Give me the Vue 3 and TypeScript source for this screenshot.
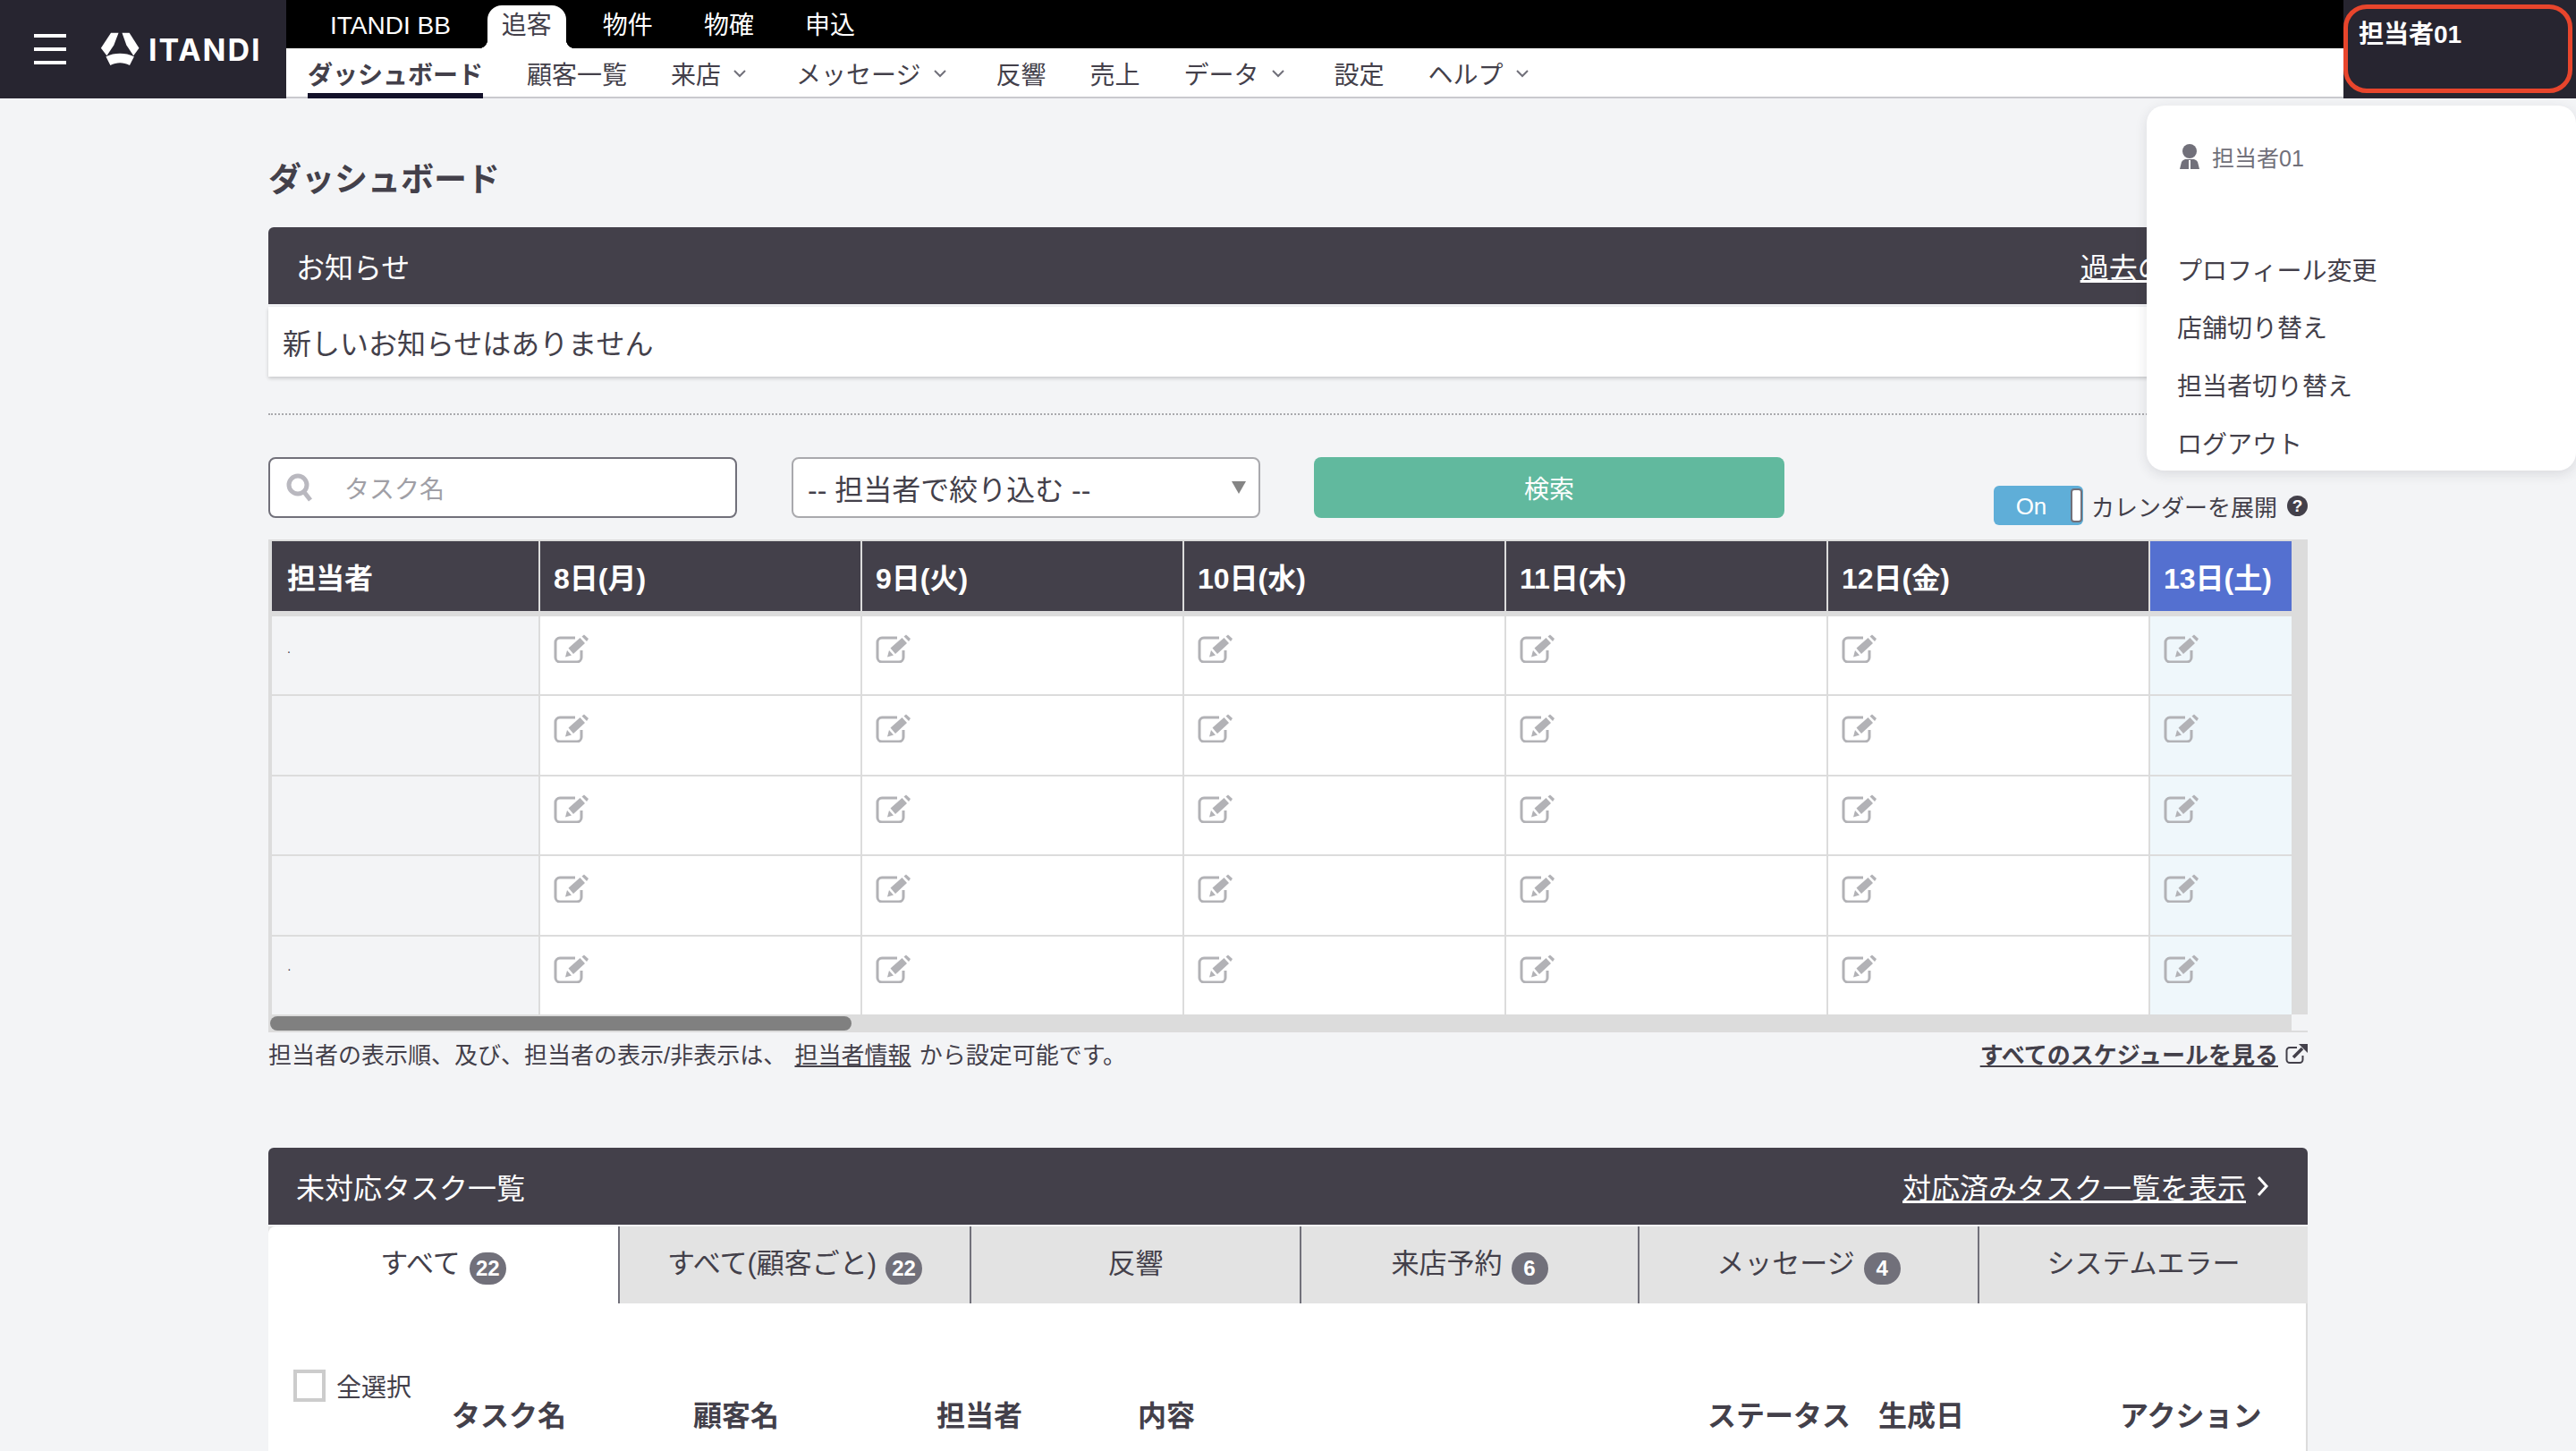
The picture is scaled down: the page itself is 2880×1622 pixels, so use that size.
<script setup lang="ts">
const topTabs = [
  { label: 'ITANDI BB', active: false },
  { label: '追客', active: true },
  { label: '物件', active: false },
  { label: '物確', active: false },
  { label: '申込', active: false },
]

const subNav = [
  { label: 'ダッシュボード', active: true, caret: false },
  { label: '顧客一覧', active: false, caret: false },
  { label: '来店', active: false, caret: true },
  { label: 'メッセージ', active: false, caret: true },
  { label: '反響', active: false, caret: false },
  { label: '売上', active: false, caret: false },
  { label: 'データ', active: false, caret: true },
  { label: '設定', active: false, caret: false },
  { label: 'ヘルプ', active: false, caret: true },
]

const days = ['8日(月)', '9日(火)', '10日(水)', '11日(木)', '12日(金)', '13日(土)']
const staffRows = ['.', '', '', '', '·']

const taskTabs = [
  { label: 'すべて', count: 22 },
  { label: 'すべて(顧客ごと)', count: 22 },
  { label: '反響', count: null },
  { label: '来店予約', count: 6 },
  { label: 'メッセージ', count: 4 },
  { label: 'システムエラー', count: null },
]

const taskColumns = ['タスク名', '顧客名', '担当者', '内容', 'ステータス', '生成日', 'アクション']
const menuItems = ['プロフィール変更', '店舗切り替え', '担当者切り替え', 'ログアウト']
</script>

<template>
  <div class="app">
    <header class="top">
      <div class="brand">
        <span class="burger"><i /><i /><i /></span>
        <svg class="logo-mark" viewBox="36 28 136 116" aria-hidden="true">
          <path d="M72 30h26L82 72 58 108 38 82z" fill="#fff" />
          <path d="M110 30h25l33 52-19 26-24-36z" fill="#fff" />
          <path d="M55 111c30-14 66-14 96 0l-15 30c-22-11-44-11-66 0z" fill="#fff" />
        </svg>
        <span class="logo-text">ITANDI</span>
      </div>

      <div class="nav">
        <div class="tier-one">
          <a v-for="t in topTabs" :key="t.label" class="top-tab" :class="{ active: t.active }">{{ t.label }}</a>
        </div>
        <div class="tier-two">
          <a v-for="n in subNav" :key="n.label" class="sub-item" :class="{ active: n.active, caret: n.caret }">
            {{ n.label }}
            <svg v-if="n.caret" class="caret-icon" viewBox="0 0 16 10" aria-hidden="true">
              <path d="M2 2l6 6 6-6" fill="none" stroke="#71707a" stroke-width="2" />
            </svg>
          </a>
        </div>
      </div>

      <div class="account">
        <div class="account-ring">担当者01</div>
      </div>
    </header>

    <main class="page">
      <h1 class="title">ダッシュボード</h1>

      <section class="notice">
        <div class="bar">
          <span>お知らせ</span>
          <a class="bar-link">過去のお知らせ</a>
        </div>
        <div class="notice-body">新しいお知らせはありません</div>
      </section>

      <div class="dots" />

      <div class="filters">
        <label class="search">
          <svg class="search-icon" viewBox="0 0 30 32" aria-hidden="true">
            <circle cx="13" cy="13" r="10" fill="none" stroke="#b9b8bf" stroke-width="5" />
            <path d="M20 21l7 9" stroke="#b9b8bf" stroke-width="5" />
          </svg>
          <span class="placeholder">タスク名</span>
        </label>
        <div class="select">
          <span>-- 担当者で絞り込む --</span>
          <i class="select-arrow" />
        </div>
        <button class="search-btn" type="button">検索</button>
        <div class="expand">
          <span class="toggle">On<i class="toggle-handle" /></span>
          <span class="expand-label">カレンダーを展開</span>
          <span class="help">?</span>
        </div>
      </div>

      <section class="calendar">
        <div class="cal-grid">
          <div class="cal-head">担当者</div>
          <div
            v-for="(d, i) in days"
            :key="d"
            class="cal-head"
            :class="{ today: i === days.length - 1 }"
          >
            {{ d }}
          </div>
          <template v-for="(s, r) in staffRows" :key="r">
            <div class="cal-name">{{ s }}</div>
            <div
              v-for="(d, i) in days"
              :key="d"
              class="cal-cell"
              :class="{ today: i === days.length - 1 }"
            >
              <svg class="edit-icon" viewBox="0 0 40 32" aria-hidden="true">
                <path
                  d="M24 4H7a5 5 0 0 0-5 5v17a5 5 0 0 0 5 5h19a5 5 0 0 0 5-5v-8"
                  fill="none"
                  stroke="#b2b2b6"
                  stroke-width="3"
                />
                <path d="M16.500 15.500L29.500 4l5.500 6-13 12z" fill="#b2b2b6" />
                <path d="M15 18l5 5.500-7 2z" fill="#b2b2b6" />
                <path d="M31.500 2.500L34 .500 39 5l-2 3z" fill="#b2b2b6" />
              </svg>
            </div>
          </template>
        </div>
        <div class="h-scroll">
          <div class="h-track"><i class="h-thumb" /></div>
          <i class="h-corner" />
        </div>
      </section>

      <div class="cal-note">
        <p>
          担当者の表示順、及び、担当者の表示/非表示は、
          <a class="note-link">担当者情報</a>
          から設定可能です。
        </p>
        <a class="all-link">
          <span>すべてのスケジュールを見る</span>
          <svg class="ext-icon" viewBox="0 0 25 22" aria-hidden="true">
            <path
              d="M13 4H5a3.500 3.500 0 0 0-3.500 3.500v10A3.500 3.500 0 0 0 5 21h11a3.500 3.500 0 0 0 3.500-3.500V13"
              fill="none"
              stroke="#43404a"
              stroke-width="2"
            />
            <path d="M9 15L19 5" stroke="#43404a" stroke-width="3.500" />
            <path d="M15 0h10v10z" fill="#43404a" />
          </svg>
        </a>
      </div>

      <section class="tasks">
        <div class="bar tasks-bar">
          <span>未対応タスク一覧</span>
          <a class="tasks-link">
            <span>対応済みタスク一覧を表示</span>
            <svg class="chev" viewBox="0 0 14 24" aria-hidden="true">
              <path d="M2 2l9 10-9 10" fill="none" stroke="#fff" stroke-width="3" />
            </svg>
          </a>
        </div>
        <div class="task-tabs">
          <div v-for="(t, i) in taskTabs" :key="t.label" class="task-tab" :class="{ active: i === 0 }">
            {{ t.label }}
            <span v-if="t.count !== null" class="badge">{{ t.count }}</span>
          </div>
        </div>
        <div class="task-body">
          <label class="select-all"><i class="check" />全選択</label>
          <div class="task-head">
            <span v-for="c in taskColumns" :key="c">{{ c }}</span>
          </div>
        </div>
      </section>
    </main>

    <!-- Account dropdown, open over the page -->
    <div class="menu">
      <div class="menu-head">
        <svg class="person" viewBox="0 0 22 28" aria-hidden="true">
          <circle cx="11" cy="8" r="8" fill="#71707a" />
          <path d="M0 28l2-8q1-2 4-3h10q3 1 4 3l2 8z" fill="#71707a" />
          <path d="M10 18h2v10h-2z" fill="#fff" />
        </svg>
        <span>担当者01</span>
      </div>
      <ul class="menu-list">
        <li v-for="m in menuItems" :key="m">{{ m }}</li>
      </ul>
    </div>
  </div>
</template>

<style scoped>
.app {
  position: relative;
  width: 2880px;
  height: 1622px;
  overflow: hidden;
  background: #f3f4f6;
  color: #43404a;
  font-family: 'Liberation Sans', 'Noto Sans CJK JP', sans-serif;
}

.top {
  display: flex;
  height: 110px;
}
.brand {
  display: flex;
  align-items: center;
  width: 320px;
  padding-left: 38px;
  box-sizing: border-box;
  background: #272530;
}
.burger {
  display: flex;
  flex-direction: column;
  justify-content: space-between;
  width: 36px;
  height: 34px;
}
.burger i {
  height: 4px;
  background: #fff;
}
.logo-mark {
  width: 45px;
  height: 38px;
  margin-left: 38px;
}
.logo-text {
  margin-left: 9px;
  font-family: Inter, sans-serif;
  font-size: 34px;
  font-weight: 700;
  letter-spacing: 2px;
  color: #fff;
}

.nav {
  flex: 1;
  display: flex;
  flex-direction: column;
}
.tier-one {
  display: flex;
  align-items: flex-end;
  gap: 25px;
  height: 54px;
  padding-left: 33px;
  background: #000;
}
.top-tab {
  position: relative;
  height: 48px;
  padding: 0 16px;
  font-size: 28px;
  line-height: 46px;
  color: #fff;
}
.top-tab.active {
  border-radius: 16px 16px 0 0;
  background: #fff;
  color: #43404a;
}
.top-tab.active::before,
.top-tab.active::after {
  content: '';
  position: absolute;
  bottom: 0;
  width: 10px;
  height: 10px;
}
.top-tab.active::before {
  left: -10px;
  background: radial-gradient(circle at 0 0, #000 10px, #fff 10.500px);
}
.top-tab.active::after {
  right: -10px;
  background: radial-gradient(circle at 100% 0, #000 10px, #fff 10.500px);
}
.tier-two {
  display: flex;
  gap: 49px;
  height: 56px;
  padding-left: 24px;
  background: #fff;
  box-shadow: inset 0 -2px 0 #c9c9ce;
}
.sub-item {
  display: flex;
  align-items: center;
  font-size: 28px;
  color: #43404a;
}
.sub-item.active {
  font-weight: 700;
  box-shadow: inset 0 -6px 0 #14122a;
}
.sub-item.caret {
  margin-right: 6px;
}
.caret-icon {
  width: 16px;
  height: 10px;
  margin-left: 13px;
}

.account {
  width: 260px;
  padding: 5px 4px 6px 0;
  box-sizing: border-box;
  background: #272530;
}
.account-ring {
  height: 100%;
  padding: 9px 0 0 12px;
  box-sizing: border-box;
  border: 5px solid #e8452c;
  border-radius: 26px;
  font-size: 28px;
  font-weight: 700;
  line-height: 40px;
  color: #fff;
}

.page {
  padding: 70px 300px 0;
}
.title {
  margin: 0 0 30px;
  font-size: 37px;
  font-weight: 700;
  line-height: 44px;
}

.bar {
  display: flex;
  align-items: center;
  justify-content: space-between;
  height: 86px;
  padding: 0 31px;
  border-radius: 6px 6px 0 0;
  background: #43404a;
  font-size: 32px;
  color: #fff;
}
.bar-link {
  text-decoration: underline;
}
.notice-body {
  display: flex;
  align-items: center;
  height: 78px;
  margin-top: 3px;
  padding-left: 16px;
  background: #fff;
  box-shadow: 0 2px 4px rgba(0, 0, 0, 0.18);
  font-size: 32px;
}

.dots {
  margin-top: 41px;
  border-top: 2px dotted #a9a9ad;
}

.filters {
  display: flex;
  margin-top: 47px;
  height: 68px;
}
.search {
  display: flex;
  align-items: center;
  width: 524px;
  padding-left: 18px;
  box-sizing: border-box;
  border: 2px solid #71707a;
  border-radius: 8px;
  background: #fff;
}
.search-icon {
  width: 30px;
  height: 32px;
}
.placeholder {
  margin-left: 35px;
  font-size: 28px;
  color: #a09fa6;
}
.select {
  display: flex;
  align-items: center;
  justify-content: space-between;
  width: 524px;
  margin-left: 61px;
  padding: 0 14px 0 16px;
  box-sizing: border-box;
  border: 2px solid #a9a9ad;
  border-radius: 8px;
  background: #fff;
  font-size: 32px;
}
.select-arrow {
  width: 0;
  height: 0;
  border-left: 8px solid transparent;
  border-right: 8px solid transparent;
  border-top: 14px solid #858585;
}
.search-btn {
  width: 526px;
  margin-left: 60px;
  border: 0;
  border-radius: 8px;
  background: #61b99e;
  font-family: inherit;
  font-size: 28px;
  color: #fff;
}
.expand {
  display: flex;
  align-items: center;
  align-self: flex-end;
  height: 44px;
  margin: 0 0 -8px auto;
}
.toggle {
  position: relative;
  width: 100px;
  height: 44px;
  padding-right: 16px;
  box-sizing: border-box;
  border-radius: 6px;
  background: #5faed8;
  font-size: 26px;
  line-height: 46px;
  text-align: center;
  color: #fff;
}
.toggle-handle {
  position: absolute;
  top: 3px;
  right: 1px;
  width: 13px;
  height: 38px;
  box-sizing: border-box;
  border: 2px solid #71707a;
  border-radius: 4px;
  background: #fff;
}
.expand-label {
  margin-left: 9px;
  font-size: 26px;
}
.help {
  width: 23px;
  height: 23px;
  margin-left: 11px;
  border-radius: 50%;
  background: #43404a;
  font-size: 19px;
  font-weight: 700;
  line-height: 24px;
  text-align: center;
  color: #fff;
}

.calendar {
  margin-top: 24px;
  padding: 2px 18px 2px 4px;
  background: #dcdcdc;
}
.cal-grid {
  display: grid;
  grid-template-columns: 298px repeat(5, 358px) 158px;
  grid-template-rows: 82px repeat(5, 87.4px);
  gap: 2px;
}
.cal-head {
  display: flex;
  align-items: center;
  height: 78px;
  padding-left: 15px;
  background: #43404a;
  font-size: 32px;
  font-weight: 700;
  color: #fff;
}
.cal-head:first-child {
  padding-left: 17px;
}
.cal-head.today {
  background: #5470d0;
}
.cal-name {
  padding: 26px 0 0 17px;
  background: #f3f4f6;
  font-size: 14px;
  line-height: 20px;
}
.cal-cell {
  padding: 20px 0 0 15px;
  background: #fff;
}
.cal-cell.today {
  background: #eff7fb;
}
.edit-icon {
  display: block;
  width: 40px;
  height: 32px;
}
.h-scroll {
  display: flex;
  height: 18px;
  margin: 0 -18px 0 -2px;
}
.h-track {
  flex: 1;
  padding-top: 2px;
}
.h-thumb {
  display: block;
  width: 650px;
  height: 16px;
  border-radius: 8px;
  background: #808080;
}
.h-corner {
  width: 18px;
  background: #f3f4f6;
}

.cal-note {
  display: flex;
  align-items: center;
  justify-content: space-between;
  height: 36px;
  margin-top: 6px;
  font-size: 26px;
}
.cal-note p {
  margin: 0;
}
.note-link {
  margin: 0 2px;
  text-decoration: underline;
}
.all-link {
  display: flex;
  align-items: center;
  font-weight: 700;
}
.all-link span {
  text-decoration: underline;
}
.ext-icon {
  width: 25px;
  height: 22px;
  margin-left: 8px;
}

.tasks {
  margin-top: 87px;
}
.tasks-link {
  display: flex;
  align-items: center;
  margin-right: 12px;
}
.tasks-link span {
  text-decoration: underline;
}
.chev {
  width: 14px;
  height: 24px;
  margin-left: 12px;
}
.task-tabs {
  display: grid;
  grid-template-columns: 391px 393px 369px 378px 380px 369px;
  height: 86px;
  margin-top: 2px;
  background: #e3e3e3;
}
.task-tab {
  display: flex;
  align-items: center;
  justify-content: center;
  gap: 10px;
  padding-bottom: 8px;
  box-sizing: border-box;
  border-left: 2px solid #71707a;
  font-size: 31px;
}
.task-tab.active {
  border-left: 0;
  border-radius: 8px 0 0 0;
  background: #fff;
}
.badge {
  min-width: 41px;
  height: 36px;
  margin-top: 16px;
  padding: 0 7px;
  box-sizing: border-box;
  border-radius: 18px;
  background: #71707a;
  font-size: 24px;
  font-weight: 700;
  line-height: 36px;
  text-align: center;
  color: #fff;
}
.task-body {
  height: 200px;
  padding-top: 74px;
  box-sizing: border-box;
  border-right: 2px solid #dcdcdc;
  background: #fff;
}
.select-all {
  display: flex;
  align-items: center;
  height: 36px;
  padding-left: 28px;
  font-size: 28px;
}
.check {
  width: 36px;
  height: 36px;
  margin-right: 12px;
  box-sizing: border-box;
  border: 4px solid #cccccc;
}
.task-head {
  display: grid;
  grid-template-columns: 270px 272px 225px 637px 191px 270px 1fr;
  margin-top: -4px;
  padding-left: 205px;
  font-size: 32px;
  font-weight: 700;
  line-height: 40px;
}

.menu {
  position: absolute;
  top: 118px;
  left: 2400px;
  width: 480px;
  height: 408px;
  border-radius: 20px;
  background: #fff;
  box-shadow: 0 4px 14px rgba(40, 40, 60, 0.12);
}
.menu-head {
  display: flex;
  align-items: center;
  gap: 14px;
  height: 34px;
  margin-top: 20px;
  padding: 20px 0 0 37px;
  font-size: 25px;
  color: #71707a;
}
.person {
  width: 22px;
  height: 28px;
}
.menu-list {
  margin: 79.600px 0 0;
  padding: 0 0 0 34px;
  list-style: none;
  font-size: 28px;
  color: #43404a;
}
.menu-list li {
  height: 64.700px;
  line-height: 64.700px;
}
</style>

<style>
html,
body {
  background: #f3f4f6;
}
</style>
